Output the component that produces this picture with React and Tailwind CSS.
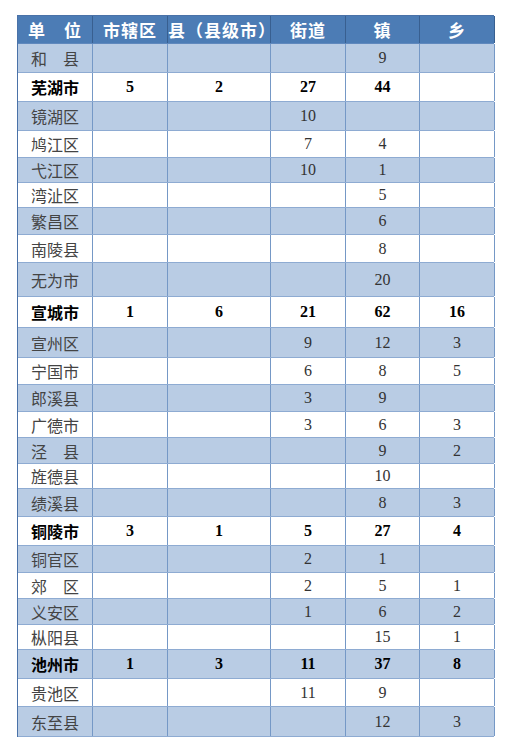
const headers = ["单　位", "市辖区", "县（县级市）", "街道", "镇", "乡"];

// name, 市辖区, 县, 街道, 镇, 乡, bold city row, row height
const rows = [
  ["和　县", "", "", "", "9", "", false, 29],
  ["芜湖市", "5", "2", "27", "44", "", true, 29],
  ["镜湖区", "", "", "10", "", "", false, 29],
  ["鸠江区", "", "", "7", "4", "", false, 27],
  ["弋江区", "", "", "10", "1", "", false, 25],
  ["湾沚区", "", "", "", "5", "", false, 25],
  ["繁昌区", "", "", "", "6", "", false, 27],
  ["南陵县", "", "", "", "8", "", false, 28],
  ["无为市", "", "", "", "20", "", false, 34],
  ["宣城市", "1", "6", "21", "62", "16", true, 31],
  ["宣州区", "", "", "9", "12", "3", false, 30],
  ["宁国市", "", "", "6", "8", "5", false, 27],
  ["郎溪县", "", "", "3", "9", "", false, 27],
  ["广德市", "", "", "3", "6", "3", false, 26],
  ["泾　县", "", "", "", "9", "2", false, 26],
  ["旌德县", "", "", "", "10", "", false, 25],
  ["绩溪县", "", "", "", "8", "3", false, 28],
  ["铜陵市", "3", "1", "5", "27", "4", true, 29],
  ["铜官区", "", "", "2", "1", "", false, 27],
  ["郊　区", "", "", "2", "5", "1", false, 26],
  ["义安区", "", "", "1", "6", "2", false, 26],
  ["枞阳县", "", "", "", "15", "1", false, 25],
  ["池州市", "1", "3", "11", "37", "8", true, 29],
  ["贵池区", "", "", "11", "9", "", false, 28],
  ["东至县", "", "", "", "12", "3", false, 30]
];

const cols = "grid grid-cols-[75px_75px_103px_75px_74px_75px]";

function App() {
  return (
    <div className="h-[751px] w-[507px] bg-white pt-[15px] pl-[17px]">
      <div className="w-[477px] border-l border-t border-[#4a72a8]">
        <div className={`${cols} h-[28px] bg-[#4c7cb5] border-b border-[#5f88bd]`}>
          {headers.map((h) => (
            <div
              key={h}
              className="flex items-center justify-center border-r border-[#385f90] text-[17px] font-bold text-white tracking-[1px] [font-family:'Noto_Sans_CJK_SC',sans-serif]"
            >
              {h}
            </div>
          ))}
        </div>

        {rows.map((row, i) => {
          const [name, a, b, c, d, e, bold, height] = row;
          const shaded = i % 2 === 0;
          return (
            <div
              key={name}
              style={{ height }}
              className={`${cols} border-b border-[#8eabd2] ${shaded ? "bg-[#b9cce4]" : "bg-white"}`}
            >
              <div
                className={`flex items-center justify-center border-r border-[#7598c6] text-[16px] [font-family:'Noto_Sans_CJK_SC',sans-serif] ${
                  bold ? "font-bold text-black" : "font-normal text-[#444]"
                }`}
              >
                {name}
              </div>
              {[a, b, c, d, e].map((v, j) => (
                <div
                  key={j}
                  className={`flex items-center justify-center border-r border-[#7598c6] text-[16px] [font-family:'Liberation_Serif',serif] ${
                    bold ? "font-bold text-black" : "text-[#333]"
                  }`}
                >
                  {v}
                </div>
              ))}
            </div>
          );
        })}
      </div>
    </div>
  );
}

export default App;
